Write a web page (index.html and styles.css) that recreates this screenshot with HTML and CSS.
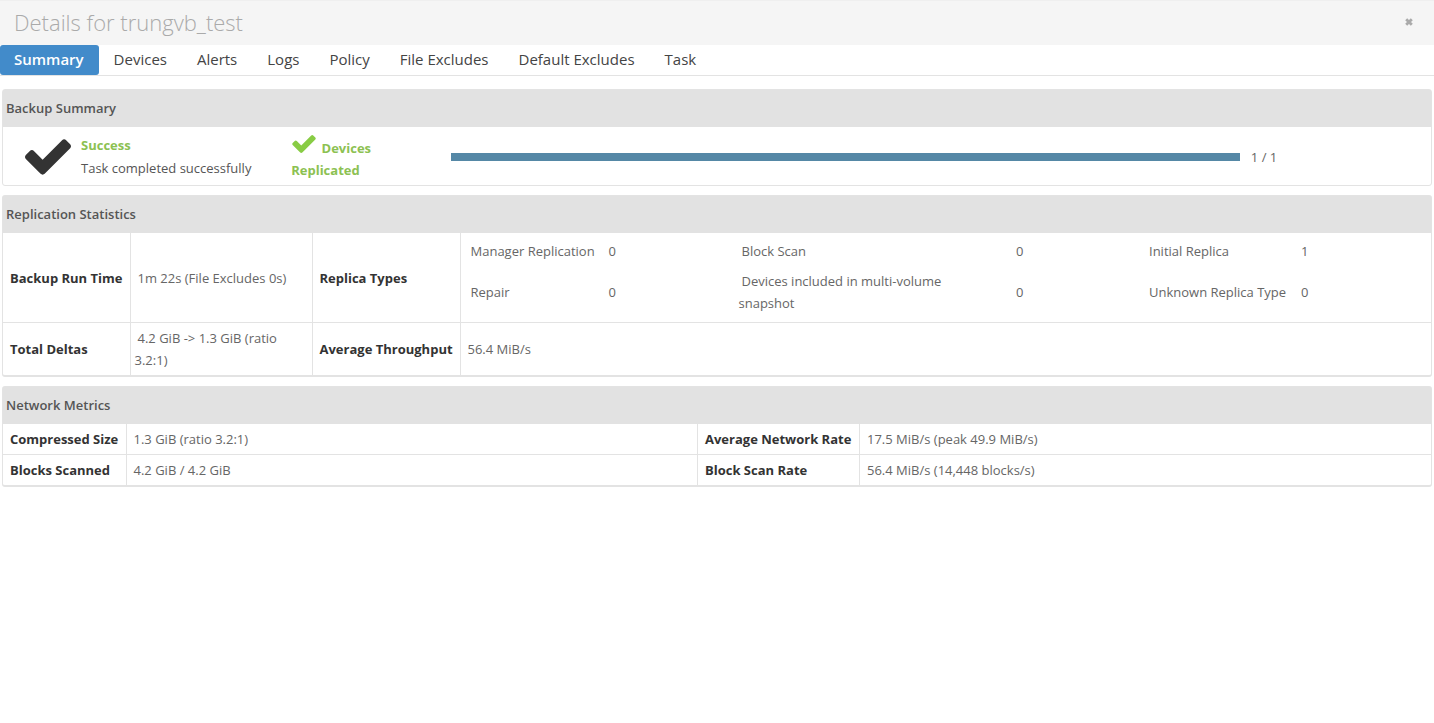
FILE: index.html
```html
<!DOCTYPE html>
<html lang="en">
<head>
<meta charset="utf-8">
<title>Details for trungvb_test</title>
<link rel="stylesheet" href="styles.css">
</head>
<body>
<header class="header">
  <h1 class="title">Details for trungvb_test</h1>
  <button class="close" type="button" aria-label="Close">
    <svg width="8" height="8" viewBox="0 0 8 8"><path d="M1.2 1.2 6.8 6.8M6.8 1.2 1.2 6.8" stroke="currentColor" stroke-width="2.8" fill="none"/></svg>
  </button>
</header>
<nav class="tabs">
  <a class="tab active" href="#summary">Summary</a>
  <a class="tab" href="#devices">Devices</a>
  <a class="tab" href="#alerts">Alerts</a>
  <a class="tab" href="#logs">Logs</a>
  <a class="tab" href="#policy">Policy</a>
  <a class="tab" href="#file-excludes">File Excludes</a>
  <a class="tab" href="#default-excludes">Default Excludes</a>
  <a class="tab" href="#task">Task</a>
</nav>
<main class="content">
  <section class="panel">
    <h2 class="panel-title">Backup Summary</h2>
    <div class="summary">
      <div class="status">
        <svg class="check-large" viewBox="121 334 1550 1188"><path fill="currentColor" d="M1671 566q0 40-28 68l-724 724-136 136q-28 28-68 28t-68-28l-136-136-362-362q-28-28-28-68t28-68l136-136q28-28 68-28t68 28l294 295 656-657q28-28 68-28t68 28l136 136q28 28 28 68z"/></svg>
        <div>
          <strong class="ok">Success</strong>
          <div class="status-text">Task completed successfully</div>
        </div>
      </div>
      <strong class="ok replicated"><svg class="check-small" viewBox="121 334 1550 1188"><path fill="currentColor" d="M1671 566q0 40-28 68l-724 724-136 136q-28 28-68 28t-68-28l-136-136-362-362q-28-28-28-68t28-68l136-136q28-28 68-28t68 28l294 295 656-657q28-28 68-28t68 28l136 136q28 28 28 68z"/></svg> Devices Replicated</strong>
      <div class="progress" role="progressbar" aria-label="Devices replicated" aria-valuemin="0" aria-valuemax="1" aria-valuenow="1"><div class="bar" style="width: 100%"></div></div>
      <div>1 / 1</div>
    </div>
  </section>

  <section class="panel raised">
    <h2 class="panel-title">Replication Statistics</h2>
    <table class="grid">
      <colgroup><col class="stat-label"><col class="stat-value"><col class="stat-label-wide"><col></colgroup>
      <tr>
        <th scope="row">Backup Run Time</th>
        <td>1m 22s (File Excludes 0s)</td>
        <th scope="row">Replica Types</th>
        <td class="nested">
          <table class="types">
            <colgroup><col class="type-name"><col class="type-count"><col><col class="type-count"><col class="type-name-wide"><col class="type-count"></colgroup>
            <tr><td>Manager Replication</td><td>0</td><td>Block Scan</td><td>0</td><td>Initial Replica</td><td>1</td></tr>
            <tr><td>Repair</td><td>0</td><td class="long">Devices included in multi-volume snapshot</td><td>0</td><td>Unknown Replica Type</td><td>0</td></tr>
          </table>
        </td>
      </tr>
      <tr>
        <th scope="row">Total Deltas</th>
        <td>4.2 GiB -&gt; 1.3 GiB (ratio 3.2:1)</td>
        <th scope="row">Average Throughput</th>
        <td>56.4 MiB/s</td>
      </tr>
    </table>
  </section>

  <section class="panel raised">
    <h2 class="panel-title">Network Metrics</h2>
    <table class="grid">
      <colgroup><col class="net-label"><col><col class="net-label-wide"><col></colgroup>
      <tr>
        <th scope="row">Compressed Size</th>
        <td>1.3 GiB (ratio 3.2:1)</td>
        <th scope="row">Average Network Rate</th>
        <td>17.5 MiB/s (peak 49.9 MiB/s)</td>
      </tr>
      <tr>
        <th scope="row">Blocks Scanned</th>
        <td>4.2 GiB / 4.2 GiB</td>
        <th scope="row">Block Scan Rate</th>
        <td>56.4 MiB/s (14,448 blocks/s)</td>
      </tr>
    </table>
  </section>
</main>
</body>
</html>
```
FILE: styles.css
```css
* { box-sizing: border-box; }
body {
  margin: 0;
  background: #fff;
  color: #666;
  font: 13px/22px "Open Sans", "Noto Sans", sans-serif;
}
.header {
  display: flex;
  align-items: center;
  justify-content: space-between;
  padding: 0 20px 2px 14px;
  background: #f5f5f5;
  border-top: 1px solid #efefef;
}
.title {
  margin: 0;
  color: #aaa;
  font-size: 22px;
  font-weight: 300;
  line-height: 42px;
}
.close {
  display: flex;
  padding: 1px;
  border: 0;
  background: none;
  color: #aaa;
}
.tabs {
  display: flex;
  gap: 1px;
  border-bottom: 1px solid #e3e3e3;
}
.tab {
  padding: 0 15px 2px 14px;
  border-radius: 3px;
  color: #444;
  font-size: 15px;
  line-height: 28px;
  text-decoration: none;
}
.tab.active {
  background: #428bca;
  color: #fff;
  font-weight: 600;
}
.content {
  display: flex;
  flex-direction: column;
  gap: 9px;
  padding: 13px 2px;
}
.panel {
  border: 1px solid #e3e3e3;
  border-radius: 3px;
}
.raised { border-bottom-width: 2px; }
.panel-title {
  margin: 0;
  padding: 0 3px 1px;
  background: #e2e2e2;
  color: #555;
  font-size: 13px;
  font-weight: 600;
  line-height: 36px;
}
.summary {
  display: grid;
  grid-template-columns: 255fr 149fr 788fr 180fr;
  column-gap: 11px;
  align-items: center;
  min-height: 58px;
  padding: 1px 0 0 22px;
}
.status {
  display: flex;
  align-items: center;
  gap: 10px;
}
.ok { color: #8cc152; }
.status-text {
  padding-top: 1px;
  color: #555;
}
.check-large {
  width: 46px;
  height: 36px;
  color: #333;
}
.check-small {
  width: 24px;
  height: 18px;
  margin: 0 2px 0 1px;
  color: #8c4;
}
.replicated { padding: 2px 50px 0 0; }
.progress {
  height: 8px;
  background: #eee;
}
.bar {
  height: 100%;
  background: #5588a6;
}
table {
  width: 100%;
  border-collapse: collapse;
  table-layout: fixed;
}
th {
  padding: 4px 7px;
  color: #333;
  font-weight: 700;
  text-align: left;
  white-space: nowrap;
}
td {
  padding: 4px;
  text-indent: 3px;
}
td.nested { padding: 3px 4px 4px 3px; }
.grid > tbody > tr + tr > * { border-top: 1px solid #e3e3e3; }
.grid > tbody > tr > * + * { border-left: 1px solid #e3e3e3; }
.stat-label { width: 127px; }
.stat-value { width: 182px; }
.stat-label-wide { width: 148px; }
.net-label { width: 123px; }
.net-label-wide { width: 162px; }
.types td.long { padding-right: 16px; }
.type-name { width: 138px; }
.type-name-wide { width: 152px; }
.type-count { width: 133px; }
```
